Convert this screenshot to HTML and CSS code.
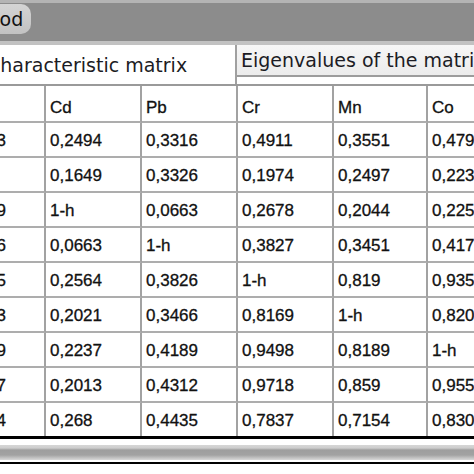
FILE: index.html
```html
<!DOCTYPE html>
<html>
<head>
<meta charset="utf-8">
<link rel="stylesheet" href="styles.css">
</head>
<body>
<div class="toolbar">
  <span class="tool-btn">Method</span>
</div>
<div class="tabs">
  <div class="tab tab-active">Characteristic matrix</div>
  <div class="tab tab-idle">Eigenvalues of the matrix</div>
</div>
<div class="grid">
  <div class="cell head">Hg</div><div class="cell head">Cd</div><div class="cell head">Pb</div><div class="cell head">Cr</div><div class="cell head">Mn</div><div class="cell head">Co</div>
  <div class="cell">0,1783</div><div class="cell">0,2494</div><div class="cell">0,3316</div><div class="cell">0,4911</div><div class="cell">0,3551</div><div class="cell">0,4795</div>
  <div class="cell">1-h</div><div class="cell">0,1649</div><div class="cell">0,3326</div><div class="cell">0,1974</div><div class="cell">0,2497</div><div class="cell">0,2233</div>
  <div class="cell">0,1649</div><div class="cell">1-h</div><div class="cell">0,0663</div><div class="cell">0,2678</div><div class="cell">0,2044</div><div class="cell">0,2251</div>
  <div class="cell">0,3326</div><div class="cell">0,0663</div><div class="cell">1-h</div><div class="cell">0,3827</div><div class="cell">0,3451</div><div class="cell">0,4174</div>
  <div class="cell">0,1975</div><div class="cell">0,2564</div><div class="cell">0,3826</div><div class="cell">1-h</div><div class="cell">0,819</div><div class="cell">0,9356</div>
  <div class="cell">0,2493</div><div class="cell">0,2021</div><div class="cell">0,3466</div><div class="cell">0,8169</div><div class="cell">1-h</div><div class="cell">0,8202</div>
  <div class="cell">0,2239</div><div class="cell">0,2237</div><div class="cell">0,4189</div><div class="cell">0,9498</div><div class="cell">0,8189</div><div class="cell">1-h</div>
  <div class="cell">0,1987</div><div class="cell">0,2013</div><div class="cell">0,4312</div><div class="cell">0,9718</div><div class="cell">0,859</div><div class="cell">0,9559</div>
  <div class="cell last">0,2544</div><div class="cell last">0,268</div><div class="cell last">0,4435</div><div class="cell last">0,7837</div><div class="cell last">0,7154</div><div class="cell last">0,8302</div>
</div>
<div class="hscroll"></div>
<div class="bottom-rule"></div>
</body>
</html>
```

FILE: styles.css
```css
html, body {
  margin: 0;
  padding: 0;
  background: #ffffff;
}
body {
  width: 474px;
  height: 474px;
  overflow: hidden;
  font-family: "DejaVu Sans", sans-serif;
  color: #1a1a1a;
}
.toolbar {
  height: 38px;
  background: #8c8c8c;
  border-top: 3px solid #b4b4b4;
  border-bottom: 4px solid #c2c2c2;
  display: flex;
  align-items: flex-start;
  white-space: nowrap;
}
.tool-btn {
  margin-top: 1px;
  margin-left: -54px;
  padding: 1px 8px 0 6px;
  height: 29px;
  line-height: 29px;
  font-size: 19px;
  background: linear-gradient(#d4d4d4, #c2c2c2);
  border-radius: 0 10px 10px 0;
  color: #111;
}
.tabs {
  display: flex;
  align-items: flex-start;
  height: 39px;
  border-bottom: 2px solid #9a9a9a;
  white-space: nowrap;
  overflow: hidden;
}
.tab {
  font-size: 19px;
  color: #1c1c24;
  flex: none;
}
.tab-active {
  margin-left: -20px;
  width: 248px;
  padding-left: 7px;
  height: 39px;
  line-height: 40px;
  background: #ffffff;
  border-right: 2px solid #a0a0a0;
}
.tab-idle {
  height: 29px;
  line-height: 29px;
  padding: 1px 0 0 4px;
  background: linear-gradient(#f6f6f6, #ececec);
  border-bottom: 2px solid #9c9c9c;
  width: 300px;
}
.grid {
  display: grid;
  grid-template-columns: 96px 96px 96px 96px 94px 96px;
  margin-left: -50px;
  width: 574px;
  border-bottom: 3px solid #000;
  font-family: "Liberation Sans", Arial, sans-serif;
  font-size: 17px;
}
.cell {
  box-sizing: border-box;
  padding: 2px 0 0 4px;
  line-height: 31px;
  border-right: 2px solid #a2a2a2;
  border-bottom: 2px solid #adadad;
  white-space: nowrap;
  overflow: hidden;
  color: #111111;
  -webkit-text-stroke: 0.3px #111111;
}
.cell.head {
  padding-top: 8px;
  line-height: 27px;
}
.cell.last {
  border-bottom: none;
}
.hscroll {
  margin-top: 6px;
  height: 15px;
  background: linear-gradient(#d6d6d6 0, #cdcdcd 3px, #9e9e9e 5px, #a2a2a2 10px, #b8b8b8 12px, #d8d8d8 15px);
}
.bottom-rule {
  margin-top: 2px;
  height: 2px;
  background: #000;
}
```
